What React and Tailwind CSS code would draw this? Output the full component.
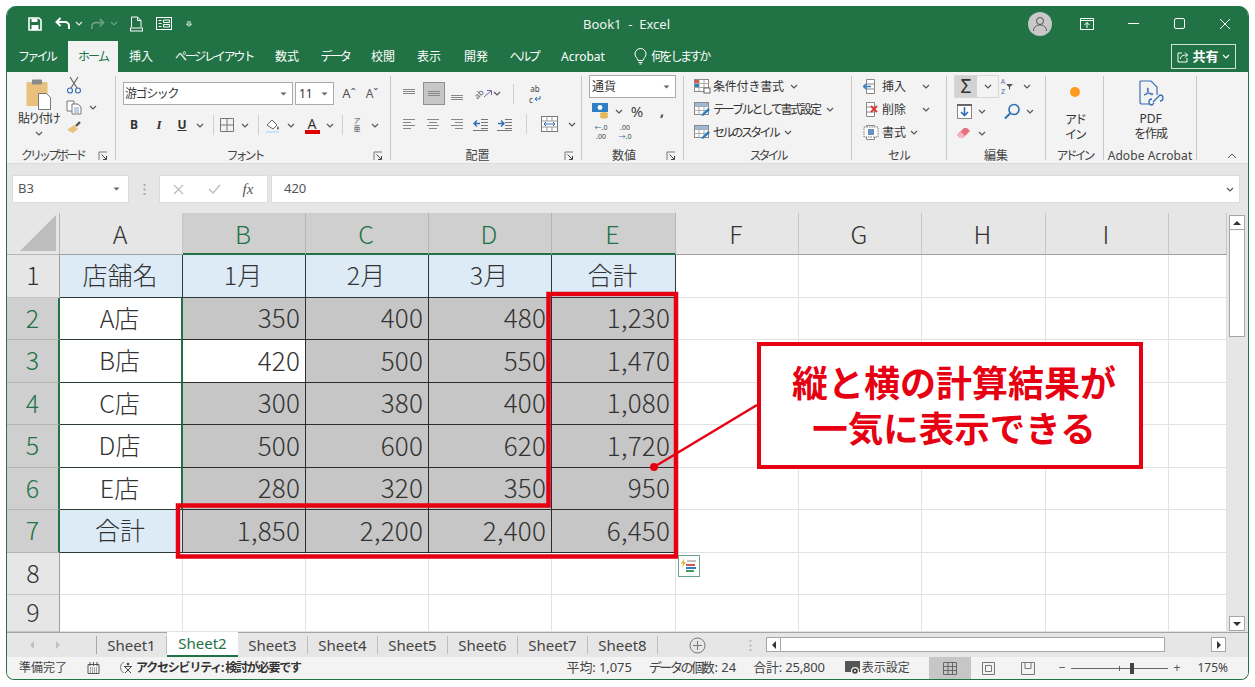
import React from "react";

function Chev({ color = "#555" }) {
  return (
    <svg width="8" height="5" viewBox="0 0 8 5" className="block">
      <path d="M1 1l3 3 3-3" fill="none" stroke={color} strokeWidth="1.2" />
    </svg>
  );
}
function Drop() {
  return (
    <svg width="7" height="4" viewBox="0 0 7 4" className="block">
      <path d="M0.5 0.5h6L3.5 3.5z" fill="#666" />
    </svg>
  );
}
function Launcher() {
  return (
    <svg width="10" height="10" viewBox="0 0 10 10" className="block">
      <path d="M1 9V1h8" fill="none" stroke="#777" strokeWidth="1" />
      <path d="M3.5 3.5l4.5 4.5M8.5 5v3.5H5" fill="none" stroke="#444" strokeWidth="1" />
    </svg>
  );
}
function Box({ w, className = "", children }) {
  return <div className={`${w} h-full flex items-center justify-center shrink-0 ${className}`}>{children}</div>;
}
function VSep() {
  return <div className="w-px h-[20px] bg-[#d0d0d0]" />;
}
function Group({ w, label, launcher, labelClass = "", children }) {
  return (
    <div className={`${w} h-[92px] shrink-0 flex flex-col relative`}>
      <div className="h-[76px]">{children}</div>
      <div className="h-[16px] flex items-start pt-[1px] pr-[1px]">
        <div className={`flex-1 text-center text-[12px] leading-[14px] text-[#444] whitespace-nowrap ${labelClass}`}>{label}</div>
        {launcher && (
          <div className="w-[17px] pt-[2px] flex">
            <Launcher />
          </div>
        )}
      </div>
      <div className="absolute right-0 top-[4px] h-[84px] w-px bg-[#c6c6c6]" />
    </div>
  );
}
function Lines({ rows, box = 16 }) {
  return (
    <svg width={box} height={box} viewBox="0 0 16 16" className="block">
      {rows.map(([x1, x2, y, c], i) => (
        <path key={i} d={`M${x1} ${y + 0.5}H${x2}`} stroke={c || "#888"} strokeWidth="1" />
      ))}
    </svg>
  );
}

function TitleIcons() {
  return (
    <div className="flex items-center h-full pl-[18px]">
      <Box w="w-[20px]">
        <svg width="14" height="14" viewBox="0 0 14 14">
          <path d="M1 1h10l2 2v10H1z" fill="none" stroke="#fff" strokeWidth="1.6" />
          <rect x="3.5" y="1.5" width="6" height="3.5" fill="#fff" />
          <rect x="3.5" y="8" width="7" height="5" fill="#fff" />
        </svg>
      </Box>
      <Box w="w-[18px] ml-[9px]">
        <svg width="16" height="13" viewBox="0 0 16 13">
          <path d="M5.5 1L1.5 5l4 4" fill="none" stroke="#fff" strokeWidth="2" />
          <path d="M2 5h8a4 4 0 0 1 4 4v3" fill="none" stroke="#fff" strokeWidth="2" />
        </svg>
      </Box>
      <Box w="w-[10px] ml-[2px]"><Chev color="#dfeee6" /></Box>
      <Box w="w-[16px] ml-[5px]">
        <svg width="15" height="12" viewBox="0 0 16 13">
          <path d="M10.5 1l4 4-4 4" fill="none" stroke="#6f9f86" strokeWidth="1.8" />
          <path d="M14 5H6a4 4 0 0 0-4 4v3" fill="none" stroke="#6f9f86" strokeWidth="1.8" />
        </svg>
      </Box>
      <Box w="w-[10px] ml-[4px]"><Chev color="#6f9f86" /></Box>
      <Box w="w-[14px] ml-[10px]">
        <svg width="13" height="16" viewBox="0 0 13 16">
          <path d="M1.5 11V1h6l3.5 3.5V11M7.5 1v3.5H11" fill="none" stroke="#fff" strokeWidth="1" />
          <rect x="0.5" y="12" width="12" height="3" fill="none" stroke="#fff" strokeWidth="1" />
        </svg>
      </Box>
      <Box w="w-[16px] ml-[13px]">
        <svg width="16" height="13" viewBox="0 0 16 13">
          <rect x="0.5" y="0.5" width="15" height="12" fill="none" stroke="#fff" />
          <path d="M2.5 3.5h3M2.5 6.5h3M2.5 9.5h3M7.5 3h6v2.5h-6zM7.5 7.5h6V10h-6z" fill="none" stroke="#fff" />
        </svg>
      </Box>
      <Box w="w-[8px] ml-[13px]">
        <svg width="6" height="6" viewBox="0 0 6 6">
          <path d="M1 1h4M0.5 3h5L3 5.5z" fill="none" stroke="#fff" strokeWidth="0.9" />
        </svg>
      </Box>
    </div>
  );
}

function Tab({ w, children, className = "" }) {
  return <div className={`${w} shrink-0 h-full flex items-center justify-center whitespace-nowrap ${className}`}>{children}</div>;
}

function Clipboard() {
  return (
    <Group w="w-[109px]" label="クリップボード" launcher labelClass="tracking-[-3px]">
      <div className="flex h-full">
        <div className="w-[52px] flex flex-col items-center pl-[11px]">
          <svg width="26" height="31" viewBox="0 0 26 31" className="mt-[7px] block">
            <rect x="0.5" y="3" width="21" height="24" rx="1" fill="#e8c27c" />
            <rect x="6" y="0.5" width="10" height="5" rx="1" fill="#8a8a8a" />
            <path d="M12.5 14.5h8l4 4v12h-12z" fill="#fff" stroke="#777" />
          </svg>
          <div className="text-[12px] leading-[13px] mt-[2px] tracking-[-1.8px] text-[#333] whitespace-nowrap">貼り付け</div>
          <div className="mt-[6px]"><Chev /></div>
        </div>
        <div className="w-[28px] ml-[1px] flex flex-col items-center pt-[4px] gap-[6px]">
          <svg width="14" height="18" viewBox="0 0 14 18" className="block">
            <path d="M3 1l7 11M11 1L4 12" stroke="#666" strokeWidth="1.2" />
            <circle cx="3" cy="14.5" r="2.5" fill="none" stroke="#3c6fb0" strokeWidth="1.2" />
            <circle cx="11" cy="14.5" r="2.5" fill="none" stroke="#3c6fb0" strokeWidth="1.2" />
          </svg>
          <svg width="16" height="15" viewBox="0 0 16 15" className="block">
            <path d="M1 1h7v10H1z" fill="#fff" stroke="#777" />
            <path d="M6 4h6l3 3v7H6z" fill="#fff" stroke="#777" />
            <path d="M8 8h5M8 10h5M8 12h5" stroke="#7aa0c8" />
          </svg>
          <svg width="16" height="13" viewBox="0 0 16 13" className="block">
            <path d="M1 9l7-5 4 4-5 4z" fill="#e8c27c" />
            <path d="M10 5l4-4" stroke="#555" strokeWidth="2.4" />
          </svg>
        </div>
        <div className="pt-[33px] ml-[1px]"><Chev /></div>
      </div>
    </Group>
  );
}

function FontGroup() {
  return (
    <Group w="w-[275px]" label="フォント" launcher labelClass="tracking-[-3px]">
      <div className="pl-[7px] pt-[10px]">
        <div className="flex items-center h-[23px]">
          <div className="w-[170px] h-full bg-white border border-[#ababab] flex items-center pl-[1px] pr-[5px] justify-between">
            <span className="text-[12px] tracking-[-1.4px] text-[#333]">游ゴシック</span>
            <Drop />
          </div>
          <div className="w-[39px] h-full ml-[2px] bg-white border border-[#ababab] flex items-center pl-[3px] pr-[5px] justify-between">
            <span className="text-[12px] text-[#333]">11</span>
            <Drop />
          </div>
          <Box w="w-[16px] ml-[7px]"><span className="text-[13px] text-[#555] leading-none">Aˆ</span></Box>
          <Box w="w-[16px] ml-[7px]"><span className="text-[12px] text-[#555] leading-none">Aˇ</span></Box>
        </div>
        <div className="flex items-center h-[22px] mt-[9px] -ml-[1px]">
          <Box w="w-[24px]"><span className="font-bold text-[12px] text-[#333]">B</span></Box>
          <Box w="w-[26px]"><span className="italic font-bold font-['Liberation_Serif',serif] text-[13px] text-[#333]">I</span></Box>
          <Box w="w-[20px]"><span className="font-bold text-[12px] underline text-[#333]">U</span></Box>
          <Box w="w-[16px]"><Chev /></Box>
          <Box w="w-[10px]"><VSep /></Box>
          <Box w="w-[18px]">
            <svg width="14" height="14" viewBox="0 0 14 14"><path d="M.5.5h13v13H.5zM7 .5v13M.5 7h13" fill="none" stroke="#777" /></svg>
          </Box>
          <Box w="w-[18px]"><Chev /></Box>
          <Box w="w-[8px]"><VSep /></Box>
          <Box w="w-[22px]">
            <svg width="16" height="16" viewBox="0 0 16 16">
              <path d="M2 8l5-5 5 5-4 4z" fill="#fff" stroke="#666" />
              <path d="M13 9c1 2 1.5 3 0 3.5S12 10 13 9z" fill="#666" />
              <rect x="1" y="14" width="13" height="2" fill="#cfe0f2" />
            </svg>
          </Box>
          <Box w="w-[14px]"><Chev /></Box>
          <Box w="w-[28px]">
            <div className="flex flex-col items-center">
              <span className="text-[14px] leading-[13px] text-[#333]">A</span>
              <div className="w-[15px] h-[4px] bg-[#e00000]" />
            </div>
          </Box>
          <Box w="w-[8px]"><Chev /></Box>
          <Box w="w-[16px]"><VSep /></Box>
          <Box w="w-[14px]">
            <div className="text-[7px] leading-[8px] text-[#555] text-center">ア<br />亜</div>
          </Box>
          <Box w="w-[22px]"><Chev /></Box>
        </div>
      </div>
    </Group>
  );
}

function Align() {
  const top = [[2, 14, 3], [2, 14, 5], [2, 14, 7]];
  const mid = [[2, 14, 5], [2, 14, 7], [2, 14, 9]];
  const bot = [[2, 14, 9], [2, 14, 11], [2, 14, 13]];
  const left = [[2, 14, 3], [2, 10, 6], [2, 14, 9], [2, 10, 12]];
  const center = [[2, 14, 3], [4, 12, 6], [2, 14, 9], [4, 12, 12]];
  const right = [[2, 14, 3], [6, 14, 6], [2, 14, 9], [6, 14, 12]];
  return (
    <Group w="w-[191px]" label="配置" launcher>
      <div className="pl-[6px] pt-[10px]">
        <div className="flex items-center h-[23px]">
          <Box w="w-[24px]"><Lines rows={top} /></Box>
          <Box w="w-[22px] ml-[2px] -mr-[2px] bg-[#c6c6c6] border border-[#8f8f8f]"><Lines rows={mid} /></Box>
          <Box w="w-[24px] ml-[2px]"><Lines rows={bot} /></Box>
          <Box w="w-[20px] ml-[4px]">
            <span className="text-[8px] leading-none text-[#555] -rotate-45">ab</span>
            <svg width="9" height="9" viewBox="0 0 9 9" className="-ml-[1px]">
              <path d="M1 8l7-6M4 1.500h4.500V6" fill="none" stroke="#7a5fa8" />
            </svg>
          </Box>
          <Box w="w-[8px]"><Chev /></Box>
          <Box w="w-[24px]"><VSep /></Box>
          <Box w="w-[16px] ml-[2px]">
            <div className="flex flex-col items-center text-[8px] leading-[11px] text-[#444]">
              <span>ab</span>
              <span className="flex items-center">
                c
                <svg width="7" height="6" viewBox="0 0 7 6" className="ml-[1px]"><path d="M6 0v3H1M3 1L1 3l2 2" fill="none" stroke="#2f6fb0" /></svg>
              </span>
            </div>
          </Box>
        </div>
        <div className="flex items-center h-[24px] mt-[7px]">
          <Box w="w-[24px]"><Lines rows={left} /></Box>
          <Box w="w-[24px]"><Lines rows={center} /></Box>
          <Box w="w-[24px]"><Lines rows={right} /></Box>
          <Box w="w-[24px]">
            <svg width="16" height="14" viewBox="0 0 16 14">
              <path d="M8 2.500h7M8 5.500h7M8 8.500h7M8 11.500h7M0 13.500h15" stroke="#777" />
              <path d="M7 6.500H1M4 3.500l-3 3 3 3" fill="none" stroke="#2f6fb0" strokeWidth="1.4" />
            </svg>
          </Box>
          <Box w="w-[24px]">
            <svg width="16" height="14" viewBox="0 0 16 14">
              <path d="M8 2.500h7M8 5.500h7M8 8.500h7M8 11.500h7M0 13.500h15" stroke="#777" />
              <path d="M1 6.500h6M4 3.500l3 3-3 3" fill="none" stroke="#2f6fb0" strokeWidth="1.4" />
            </svg>
          </Box>
          <Box w="w-[8px] ml-[5px]"><VSep /></Box>
          <Box w="w-[24px] ml-[7px]">
            <svg width="17" height="16" viewBox="0 0 17 16">
              <rect x="0.5" y="0.5" width="16" height="15" fill="#fff" stroke="#777" />
              <path d="M.5 5h16M.5 11h16M6 .5V5M11 .5V5M6 11v4.500M11 11v4.500" stroke="#999" />
              <path d="M3 8h11M5 6l-2 2 2 2M12 6l2 2-2 2" fill="none" stroke="#2f6fb0" />
            </svg>
          </Box>
          <Box w="w-[10px] ml-[6px]"><Chev /></Box>
        </div>
      </div>
    </Group>
  );
}

function NumberGroup() {
  return (
    <Group w="w-[102px]" label="数値" launcher>
      <div className="pl-[7px] pt-[3px]">
        <div className="w-[87px] h-[23px] bg-white border border-[#ababab] flex items-center justify-between pl-[2px] pr-[5px]">
          <span className="text-[12px] text-[#333]">通貨</span>
          <Drop />
        </div>
        <div className="flex items-center h-[24px] mt-[1px]">
          <Box w="w-[24px]">
            <svg width="18" height="16" viewBox="0 0 18 16">
              <rect x="0" y="0" width="16" height="9" fill="#2f7fc4" />
              <circle cx="8" cy="4.5" r="2.4" fill="#fff" />
              <ellipse cx="12" cy="11" rx="4" ry="2" fill="#e5b85c" />
              <ellipse cx="12" cy="13.5" rx="4" ry="2" fill="#e5b85c" />
            </svg>
          </Box>
          <Box w="w-[12px]"><Chev /></Box>
          <Box w="w-[20px] ml-[2px]"><span className="text-[15px] leading-none text-[#444]">%</span></Box>
          <Box w="w-[20px] ml-[5px]"><span className="font-bold text-[14px] leading-[8px] text-[#444]">,</span></Box>
        </div>
        <div className="flex items-center h-[20px] mt-[-1px]">
          <Box w="w-[24px]">
            <div className="text-[7px] leading-[9px] text-[#444] text-center whitespace-nowrap"><span className="text-[#2f6fb0]">←</span>.0<br />.00</div>
          </Box>
          <Box w="w-[24px]">
            <div className="text-[7px] leading-[9px] text-[#444] text-center whitespace-nowrap">.00<br /><span className="text-[#2f6fb0]">→</span>.0</div>
          </Box>
        </div>
      </div>
    </Group>
  );
}

function StyleIcon({ v }) {
  return (
    <svg width="17" height="15" viewBox="0 0 17 15" className="block">
      <rect x="0.5" y="0.5" width="14" height="12" fill="#fff" stroke="#888" />
      <path d="M.5 4.500h14M.5 8.500h14M5 .5v12M10 .5v12" stroke="#aaa" />
      {v === 0 ? (
        <>
          <rect x="1" y="1" width="4" height="3" fill="#d9534f" />
          <rect x="1" y="5" width="4" height="3" fill="#2f7fc4" />
          <rect x="10" y="9" width="6" height="5" fill="#fff" stroke="#666" />
        </>
      ) : (
        <>
          <rect x="1" y="1" width="13" height="3" fill="#9fb8d8" />
          <path d="M7 13l7-7 2 2-7 6z" fill="#2f7fc4" />
        </>
      )}
    </svg>
  );
}

function Styles() {
  const rows = [
    ["条件付き書式", 0, "tracking-[-0.2px]"],
    ["テーブルとして書式設定", 1, "tracking-[-2.2px]"],
    ["セルのスタイル", 2, "tracking-[-2.7px]"],
  ];
  return (
    <Group w="w-[168px]" label="スタイル" labelClass="tracking-[-3px]">
      <div className="pl-[10px] pt-[3px] flex flex-col">
        {rows.map(([t, v, tr]) => (
          <div key={t} className="flex items-center h-[23px]">
            <StyleIcon v={v} />
            <span className={`ml-[2px] text-[12px] text-[#333] whitespace-nowrap ${tr}`}>{t}</span>
            <span className="ml-[6px]"><Chev /></span>
          </div>
        ))}
      </div>
    </Group>
  );
}

function Cells() {
  const icon = (c) => (
    <svg width="16" height="15" viewBox="0 0 16 15" className="block">
      <path d="M3.500.5h8v14h-8zM3.500 5h8M3.500 10h8" fill="#fff" stroke="#888" />
      {c === 0 && <path d="M0 7.500h8M3 5L.5 7.500 3 10" fill="none" stroke="#2f7fc4" strokeWidth="1.3" />}
      {c === 1 && <path d="M8 4l6 6M14 4l-6 6" stroke="#d9362b" strokeWidth="1.8" />}
      {c === 2 && <path d="M1 2h14v10H1z" fill="#fff" stroke="#777" strokeDasharray="1.5 1" />}
      {c === 2 && <rect x="5" y="4" width="6" height="6" fill="#6b90c0" />}
    </svg>
  );
  return (
    <Group w="w-[95px]" label="セル" labelClass="tracking-[-1px]">
      <div className="pl-[11px] pt-[3px] flex flex-col">
        {[["挿入", 0, "ml-[16px]"], ["削除", 1, "ml-[16px]"], ["書式", 2, "ml-[4px]"]].map(([t, c, m]) => (
          <div key={t} className="flex items-center h-[23px]">
            {icon(c)}
            <span className="ml-[3px] text-[12px] text-[#333] whitespace-nowrap">{t}</span>
            <span className={m}><Chev /></span>
          </div>
        ))}
      </div>
    </Group>
  );
}

function Edit() {
  return (
    <Group w="w-[99px]" label="編集">
      <div className="pl-[7px] pt-[3px]">
        <div className="flex items-center h-[23px]">
          <div className="w-[45px] h-full border border-[#d8d8d8] flex">
            <div className="w-[22px] bg-[#d2d2d2] flex items-center justify-center">
              <span className="text-[19px] leading-none text-[#333]">Σ</span>
            </div>
            <div className="flex-1 flex items-center justify-center"><Chev /></div>
          </div>
          <Box w="w-[14px] ml-[1px]">
            <div className="text-[7px] leading-[10px] text-center"><span className="text-[#7a5fa8]">A</span><br /><span className="text-[#2f6fb0]">Z</span></div>
            <svg width="7" height="7" viewBox="0 0 7 7" className="ml-[1px]"><path d="M0 1h7L4 4v3L3 6V4z" fill="#555" /></svg>
          </Box>
          <Box w="w-[12px] ml-[7px]"><Chev /></Box>
        </div>
        <div className="flex items-center h-[24px] mt-[1px]">
          <Box w="w-[20px]">
            <svg width="15" height="15" viewBox="0 0 15 15">
              <rect x="0.5" y="0.5" width="14" height="14" fill="#fff" stroke="#888" />
              <rect x="0" y="0" width="15" height="2" fill="#666" />
              <path d="M7.500 3v8M4 8l3.500 3.500L11 8" fill="none" stroke="#2f6fb0" strokeWidth="1.6" />
            </svg>
          </Box>
          <Box w="w-[12px] ml-[2px]"><Chev /></Box>
          <Box w="w-[20px] ml-[14px]">
            <svg width="17" height="17" viewBox="0 0 17 17">
              <circle cx="10" cy="6.500" r="5" fill="none" stroke="#2f6fb0" strokeWidth="1.6" />
              <path d="M6 10.500l-5 5" stroke="#2f6fb0" strokeWidth="2" />
            </svg>
          </Box>
          <Box w="w-[12px] ml-[2px]"><Chev /></Box>
        </div>
        <div className="flex items-center h-[20px]">
          <Box w="w-[20px]">
            <svg width="15" height="12" viewBox="0 0 15 12">
              <path d="M0 8l7-7 3 0 3 3-7 7H3z" fill="#e6707f" />
              <path d="M0 8l3 3h3l2-2-4-4z" fill="#f3b6be" />
            </svg>
          </Box>
          <Box w="w-[12px] ml-[2px]"><Chev /></Box>
        </div>
      </div>
    </Group>
  );
}

function AddIn() {
  return (
    <Group w="w-[58px]" label="アドイン" labelClass="tracking-[-3px]">
      <div className="flex flex-col items-center pt-[15px]">
        <div className="w-[10px] h-[10px] rounded-full bg-[#ff9a1f]" />
        <div className="mt-[15px] text-[12px] leading-[15px] text-center text-[#333] tracking-[-2px]">アド<br />イン</div>
      </div>
    </Group>
  );
}

function Adobe() {
  return (
    <Group w="w-[93px]" label="Adobe Acrobat" labelClass="text-[12.5px] tracking-[0.1px]">
      <div className="flex flex-col items-center pt-[8px]">
        <svg width="26" height="27" viewBox="0 0 26 27" className="block">
          <path d="M2 1h11l6 6v8M2 1v21a2 2 0 0 0 2 2h8" fill="none" stroke="#3b6fb5" strokeWidth="1.2" />
          <path d="M6 15c3-1 5-5 4-7-1-1-1 3 2 6 1 1 3 1 3 0s-5-1-9 1z" fill="none" stroke="#3b6fb5" />
          <path d="M15 22l6-6M14 19a2.500 2.500 0 0 0 0 6l2-2M22 21a2.500 2.500 0 0 0 0-6l-2 2" fill="none" stroke="#3b6fb5" strokeWidth="1.3" />
        </svg>
        <div className="mt-[4px] text-[12px] leading-[15px] text-center text-[#333]">PDF<br /><span className="tracking-[-1.2px]">を作成</span></div>
      </div>
    </Group>
  );
}

const data = [
  ["店舗名", "1月", "2月", "3月", "合計"],
  ["A店", "350", "400", "480", "1,230"],
  ["B店", "420", "500", "550", "1,470"],
  ["C店", "300", "380", "400", "1,080"],
  ["D店", "500", "600", "620", "1,720"],
  ["E店", "280", "320", "350", "950"],
  ["合計", "1,850", "2,200", "2,400", "6,450"],
];
const colNames = ["A", "B", "C", "D", "E", "F", "G", "H", "I", ""];

function Sheet() {
  const cells = [];
  cells.push(
    <div key="corner" className="bg-[#e6e6e6] border-r border-b border-[#b5b5b5] flex items-end justify-end pr-[3px] pb-[3px]">
      <svg width="36" height="36" viewBox="0 0 36 36" className="block"><path d="M36 0v36H0z" fill="#bdbdbd" /></svg>
    </div>
  );
  colNames.forEach((c, i) => {
    const sel = i >= 1 && i <= 4;
    cells.push(
      <div
        key={"h" + i}
        className={`flex items-center justify-center border-r text-[25px] leading-none font-light pr-[2px] ${
          sel ? "bg-[#cfcfcf] text-[#217346] border-[#b5b5b5] border-b-2 border-b-[#217346]" : "bg-[#e6e6e6] text-[#333] border-[#c6c6c6] border-b border-b-[#9f9f9f]"
        }`}
      >
        {c}
      </div>
    );
  });
  for (let r = 0; r < 9; r++) {
    const sel = r >= 1 && r <= 6;
    cells.push(
      <div
        key={"r" + r}
        className={`flex items-center justify-center border-b text-[25px] leading-none font-light pb-[3px] ${
          sel ? "bg-[#cfcfcf] text-[#217346] border-[#b5b5b5] border-r-2 border-r-[#217346]" : "bg-[#e6e6e6] text-[#333] border-[#c6c6c6] border-r border-r-[#9f9f9f]"
        }`}
      >
        {r + 1}
      </div>
    );
    for (let c = 0; c < 10; c++) {
      const v = data[r] && data[r][c];
      if (v === undefined) {
        cells.push(<div key={r + "-" + c} className="bg-white border-r border-b border-[#e2e2e2]" />);
        continue;
      }
      const head = r === 0;
      const totalRow = r === 6;
      const first = c === 0;
      const isActive = r === 2 && c === 1;
      let cls = "";
      if (head || (first && totalRow)) cls = "bg-[#ddebf7] justify-center pr-[2px] text-[25px] border-r border-b border-[#2c3a36]";
      else if (first) cls = "bg-white justify-center pr-[2px] text-[25px] border-r-2 border-b border-r-[#217346] border-b-[#2c3a36]";
      else if (isActive) cls = "bg-white justify-end pr-[5px] text-[26px] tracking-[0.2px] border-r border-b border-[#2c2c2c]";
      else cls = "bg-[#c6c6c6] justify-end pr-[5px] text-[26px] tracking-[0.2px] border-r border-b border-[#2c2c2c]";
      cells.push(
        <div key={r + "-" + c} className={`flex items-center pb-[3px] font-light leading-none text-[#333] whitespace-nowrap ${cls}`}>
          {v}
        </div>
      );
    }
  }
  return (
    <div className="flex-1 min-w-0 grid grid-cols-[53px_123px_123px_123px_123px_124px_123px_123px_124px_123px_58px] grid-rows-[42px_43px_42px_43px_42px_43px_42px_43px_42px_37px] font-['Noto_Sans_CJK_JP',sans-serif] overflow-hidden">
      {cells}
    </div>
  );
}

function Overlay() {
  return (
    <>
      <svg className="absolute left-0 top-0 pointer-events-none" width="1255" height="687" viewBox="0 0 1255 687">
        <path d="M548.5 294H676V556.5H178V505.5H548.5Z" fill="none" stroke="#e60012" strokeWidth="4.5" />
        <path d="M757 405L654 467" stroke="#e60012" strokeWidth="2.5" />
        <circle cx="654" cy="467" r="4" fill="#e60012" />
      </svg>
      <div className="absolute left-[757px] top-[342px] w-[386px] h-[127px] bg-white border-4 border-[#e60012] flex flex-col items-center justify-center pb-[4px] pl-[8px] text-[#e60012] font-bold text-[36px] leading-[45px] font-['Noto_Sans_CJK_JP',sans-serif] whitespace-nowrap">
        <div>縦と横の計算結果が</div>
        <div className="text-[35.5px]">一気に表示できる</div>
      </div>
      <div className="absolute left-[678px] top-[555px] w-[22px] h-[22px] bg-white border border-[#6aa58a] flex items-center justify-center">
        <svg width="16" height="16" viewBox="0 0 16 16">
          <path d="M3 0L0 6h2L1 10l4-6H3z" fill="#e9b44c" />
          <path d="M6 3h9" stroke="#888" />
          <rect x="5" y="6" width="9" height="2" fill="#d9534f" />
          <rect x="5" y="9" width="10" height="2" fill="#2f7fc4" />
          <rect x="5" y="12" width="8" height="2" fill="#3f9d6b" />
        </svg>
      </div>
    </>
  );
}

export default function App() {
  const sheets = ["Sheet1", "Sheet2", "Sheet3", "Sheet4", "Sheet5", "Sheet6", "Sheet7", "Sheet8"];
  return (
    <div className="relative w-[1255px] h-[687px] bg-white pl-[6px] pt-[6px] overflow-hidden font-['Noto_Sans','Noto_Sans_CJK_JP',sans-serif]">
      <div className="w-[1243px] h-[674px] flex flex-col rounded-t-[10px] rounded-b-[8px] overflow-hidden border-x border-b border-[#217346] bg-[#e6e6e6]">
        {/* title */}
        <div className="h-[35px] shrink-0 bg-[#217346] flex items-center relative text-white">
          <TitleIcons />
          <div className="flex-1" />
          <div className="absolute left-[576px] top-[10px] text-[13px] leading-[17px] text-[#f0f5f2] whitespace-pre">Book1  -  Excel</div>
          <div className="w-[24px] h-[24px] rounded-full bg-[#c8c8c8] flex items-center justify-center">
            <svg width="16" height="16" viewBox="0 0 16 16">
              <circle cx="8" cy="5" r="3.500" fill="none" stroke="#555" />
              <path d="M1.500 15c0-4 3-6 6.500-6s6.500 2 6.500 6" fill="none" stroke="#555" />
            </svg>
          </div>
          <Box w="w-[46px] ml-[12px]">
            <svg width="14" height="12" viewBox="0 0 14 12">
              <path d="M.5.5h13v11H.5zM.5 2.500h13" fill="none" stroke="#fff" />
              <path d="M7 10V4.500M4.500 7L7 4.500 9.500 7" fill="none" stroke="#fff" />
            </svg>
          </Box>
          <Box w="w-[46px]"><div className="w-[11px] h-px bg-white" /></Box>
          <Box w="w-[46px]"><div className="w-[11px] h-[11px] border border-white rounded-[2px]" /></Box>
          <Box w="w-[46px]">
            <svg width="12" height="12" viewBox="0 0 12 12"><path d="M1 1l10 10M11 1L1 11" stroke="#fff" /></svg>
          </Box>
        </div>
        {/* tabs */}
        <div className="h-[31px] shrink-0 bg-[#217346] flex items-center text-white text-[12px]">
          <Tab w="w-[61px]" className="tracking-[-2.8px] pr-[2px]">ファイル</Tab>
          <Tab w="w-[50px]" className="bg-[#f3f3f3] text-[#217346] tracking-[-1.8px]">ホーム</Tab>
          <Tab w="w-[46px]">挿入</Tab>
          <Tab w="w-[100px]" className="tracking-[-2.2px]">ページレイアウト</Tab>
          <Tab w="w-[46px]">数式</Tab>
          <Tab w="w-[50px]" className="tracking-[-2.4px]">データ</Tab>
          <Tab w="w-[46px]">校閲</Tab>
          <Tab w="w-[46px]">表示</Tab>
          <Tab w="w-[48px]">開発</Tab>
          <Tab w="w-[48px]" className="tracking-[-2.4px]">ヘルプ</Tab>
          <Tab w="w-[50px] ml-[10px]">Acrobat</Tab>
          <Tab w="w-[16px] ml-[24px]">
            <svg width="13" height="17" viewBox="0 0 13 17">
              <path d="M4 12.500C3.500 10 1 9 1 6a5.500 5.500 0 0 1 11 0c0 3-2.500 4-3 6.500z" fill="none" stroke="#fff" />
              <path d="M4.500 14.500h4M5.500 16h2" stroke="#fff" />
            </svg>
          </Tab>
          <Tab w="w-[58px] ml-[3px]" className="tracking-[-2.4px]">何をしますか</Tab>
          <div className="flex-1" />
          <div className="w-[65px] h-[25px] border border-[#cfe0d7] flex items-center justify-center gap-[3px] mr-[12px]">
            <svg width="12" height="12" viewBox="0 0 12 12">
              <path d="M5 2H1v9h9V7" fill="none" stroke="#fff" />
              <path d="M3.500 8c0-3 2-4 7-4M8 1.500L10.500 4 8 6.500" fill="none" stroke="#fff" />
            </svg>
            <span className="font-bold text-[13px]">共有</span>
            <Chev color="#fff" />
          </div>
        </div>
        {/* ribbon */}
        <div className="h-[92px] shrink-0 bg-[#f3f3f3] flex items-start border-b border-[#dcdcdc]">
          <Clipboard />
          <FontGroup />
          <Align />
          <NumberGroup />
          <Styles />
          <Cells />
          <Edit />
          <AddIn />
          <Adobe />
          <div className="flex-1 h-full flex items-end justify-end pr-[11px] pb-[4px]">
            <svg width="10" height="6" viewBox="0 0 10 6"><path d="M1 5l4-4 4 4" fill="none" stroke="#555" /></svg>
          </div>
        </div>
        {/* formula bar */}
        <div className="h-[49px] shrink-0 bg-[#e6e6e6] flex items-start pt-[11px] pl-[5px] pr-[8px]">
          <div className="w-[117px] h-[28px] bg-white border border-[#dcdcdc] flex items-center justify-between pl-[5px] pr-[8px] text-[13px] text-[#555]">
            <span>B3</span>
            <Drop />
          </div>
          <div className="w-[30px] h-[28px] flex items-center justify-center">
            <svg width="3" height="11" viewBox="0 0 3 11"><path d="M1.500 0v2M1.500 4.500v2M1.500 9v2" stroke="#aaa" strokeWidth="2" /></svg>
          </div>
          <div className="w-[109px] h-[28px] bg-white border border-[#dcdcdc] flex items-center text-[#bbb]">
            <Box w="w-[36px]"><svg width="11" height="11" viewBox="0 0 11 11"><path d="M1 1l9 9M10 1l-9 9" stroke="#bdbdbd" strokeWidth="1.2" /></svg></Box>
            <Box w="w-[36px]"><svg width="13" height="10" viewBox="0 0 13 10"><path d="M1 5l4 4 7-8" fill="none" stroke="#bdbdbd" strokeWidth="1.4" /></svg></Box>
            <Box w="w-[32px]"><span className="italic font-['Liberation_Serif',serif] text-[15px] text-[#555]">fx</span></Box>
          </div>
          <div className="flex-1 h-[28px] ml-[3px] bg-white border border-[#dcdcdc] flex items-center justify-between pl-[12px] pr-[5px] text-[13px] text-[#555]">
            <span>420</span>
            <Chev />
          </div>
        </div>
        {/* grid + scrollbar */}
        <div className="h-[419px] shrink-0 flex bg-[#e6e6e6]">
          <Sheet />
          <div className="w-[21px] shrink-0 flex flex-col pt-[2px] pl-[2px] pr-[3px] pb-[1px]">
            <div className="h-[15px] bg-white border border-[#a6a6a6] flex items-center justify-center">
              <svg width="8" height="4" viewBox="0 0 8 4"><path d="M0 4l4-4 4 4z" fill="#333" /></svg>
            </div>
            <div className="h-[107px] bg-white border border-[#a6a6a6] border-t-0" />
            <div className="flex-1" />
            <div className="h-[15px] bg-white border border-[#a6a6a6] flex items-center justify-center">
              <svg width="8" height="4" viewBox="0 0 8 4"><path d="M0 0l4 4 4-4z" fill="#333" /></svg>
            </div>
          </div>
        </div>
        {/* sheet tabs */}
        <div className="h-[25px] shrink-0 bg-[#e6e6e6] border-t border-[#a6a6a6] flex items-stretch text-[15px] leading-none text-[#444]">
          <div className="w-[90px] shrink-0 flex items-center border-r border-[#a6a6a6] my-[3px] pl-[23px] gap-[22px]">
            <svg width="4" height="8" viewBox="0 0 4 8"><path d="M4 0L0 4l4 4z" fill="#c0c0c0" /></svg>
            <svg width="4" height="8" viewBox="0 0 4 8"><path d="M0 0l4 4-4 4z" fill="#c0c0c0" /></svg>
          </div>
          {sheets.map((s, i) =>
            i === 1 ? (
              <div key={s} className="w-[71px] shrink-0 -mt-px bg-white border-b-2 border-[#217346] text-[#217346] flex items-center justify-center">{s}</div>
            ) : (
              <div key={s} className="w-[70px] shrink-0 my-[3px] flex items-center justify-center border-r border-[#bdbdbd]">{s}</div>
            )
          )}
          <div className="w-[79px] shrink-0 flex items-center justify-center pl-[1px] ml-[-1px]">
            <svg width="17" height="17" viewBox="0 0 17 17">
              <circle cx="8.500" cy="8.500" r="7.500" fill="none" stroke="#777" />
              <path d="M8.500 4v9M4 8.500h9" stroke="#777" />
            </svg>
          </div>
          <div className="w-[12px] ml-[13px] shrink-0 flex items-center">
            <svg width="3" height="11" viewBox="0 0 3 11"><path d="M1.500 0v2M1.500 4.500v2M1.500 9v2" stroke="#bbb" strokeWidth="2" /></svg>
          </div>
          <div className="flex-1 flex items-center pt-[1px] pb-[2px] pl-[5px] pr-[22px]">
            <div className="w-[15px] h-[15px] bg-white border border-[#a6a6a6] flex items-center justify-center">
              <svg width="4" height="8" viewBox="0 0 4 8"><path d="M4 0L0 4l4 4z" fill="#333" /></svg>
            </div>
            <div className="w-[384px] h-[15px] bg-white border border-[#a6a6a6] border-l-0" />
            <div className="flex-1" />
            <div className="w-[15px] h-[15px] bg-white border border-[#a6a6a6] flex items-center justify-center">
              <svg width="4" height="8" viewBox="0 0 4 8"><path d="M0 0l4 4-4 4z" fill="#333" /></svg>
            </div>
          </div>
        </div>
        {/* status */}
        <div className="flex-1 bg-[#f3f3f3] flex items-center text-[12px] text-[#444] whitespace-nowrap">
          <span className="ml-[12px]">準備完了</span>
          <svg width="13" height="13" viewBox="0 0 13 13" className="ml-[20px]">
            <path d="M1 2.500h11v9H1z" fill="none" stroke="#555" />
            <path d="M3 0v4M6.500 0v4M10 0v4" stroke="#555" />
            <path d="M3 6h7M3 8h7M3 10h7" stroke="#555" strokeDasharray="1 1" />
          </svg>
          <svg width="14" height="14" viewBox="0 0 14 14" className="ml-[20px]">
            <path d="M4 1a6 6 0 0 0 0 11" fill="none" stroke="#777" />
            <circle cx="8" cy="3" r="1.300" fill="#444" />
            <path d="M4 5.500h8M5 12l6-6M5 6l6 6" stroke="#444" />
          </svg>
          <span className="ml-[2px] font-bold tracking-[-1.2px] text-[#333]">アクセシビリティ: 検討が必要です</span>
          <div className="flex-1" />
          <span className="text-[13px] tracking-[-0.1px]">平均: 1,075</span>
          <span className="ml-[17px] text-[13px]"><span className="tracking-[-2.4px]">データの個数</span><span className="ml-[2px]">: 24</span></span>
          <span className="ml-[17px] text-[13px] tracking-[-0.2px]">合計: 25,800</span>
          <svg width="16" height="15" viewBox="0 0 16 15" className="ml-[20px]">
            <rect x="0" y="0" width="15" height="11" fill="#555" />
            <circle cx="10" cy="10" r="4" fill="#f3f3f3" />
            <circle cx="10" cy="10" r="2.800" fill="#444" />
            <circle cx="10" cy="10" r="1" fill="#f3f3f3" />
          </svg>
          <span className="ml-[1px]">表示設定</span>
          <div className="w-[42px] h-full ml-[19px] bg-[#c6c6c6] flex items-center justify-center">
            <svg width="14" height="13" viewBox="0 0 14 13"><path d="M.5.500h13v12H.5zM5 .5v12M9.500.5v12M.5 4.500h13M.5 8.500h13" fill="none" stroke="#666" /></svg>
          </div>
          <Box w="w-[36px]">
            <svg width="13" height="13" viewBox="0 0 13 13"><path d="M.5.500h12v12H.5z" fill="none" stroke="#777" /><path d="M3.500 3.500h6v6h-6z" fill="none" stroke="#777" /></svg>
          </Box>
          <Box w="w-[42px]">
            <svg width="14" height="13" viewBox="0 0 14 13"><path d="M.5.500h13v12H.5zM4 .5v6h6v-6" fill="none" stroke="#777" /></svg>
          </Box>
          <span className="ml-[10px] text-[12px] leading-none text-[#555]">−</span>
          <div className="w-[97px] h-[1px] ml-[5px] bg-[#666] flex items-center">
            <div className="ml-[48px] w-px h-[5px] shrink-0 bg-[#666]" />
            <div className="ml-[10px] w-[4px] h-[11px] shrink-0 bg-[#444]" />
          </div>
          <span className="ml-[6px] text-[12px] leading-none text-[#555]">+</span>
          <span className="ml-[17px] mr-[20px] text-[12px]">175%</span>
        </div>
      </div>
      <Overlay />
    </div>
  );
}
